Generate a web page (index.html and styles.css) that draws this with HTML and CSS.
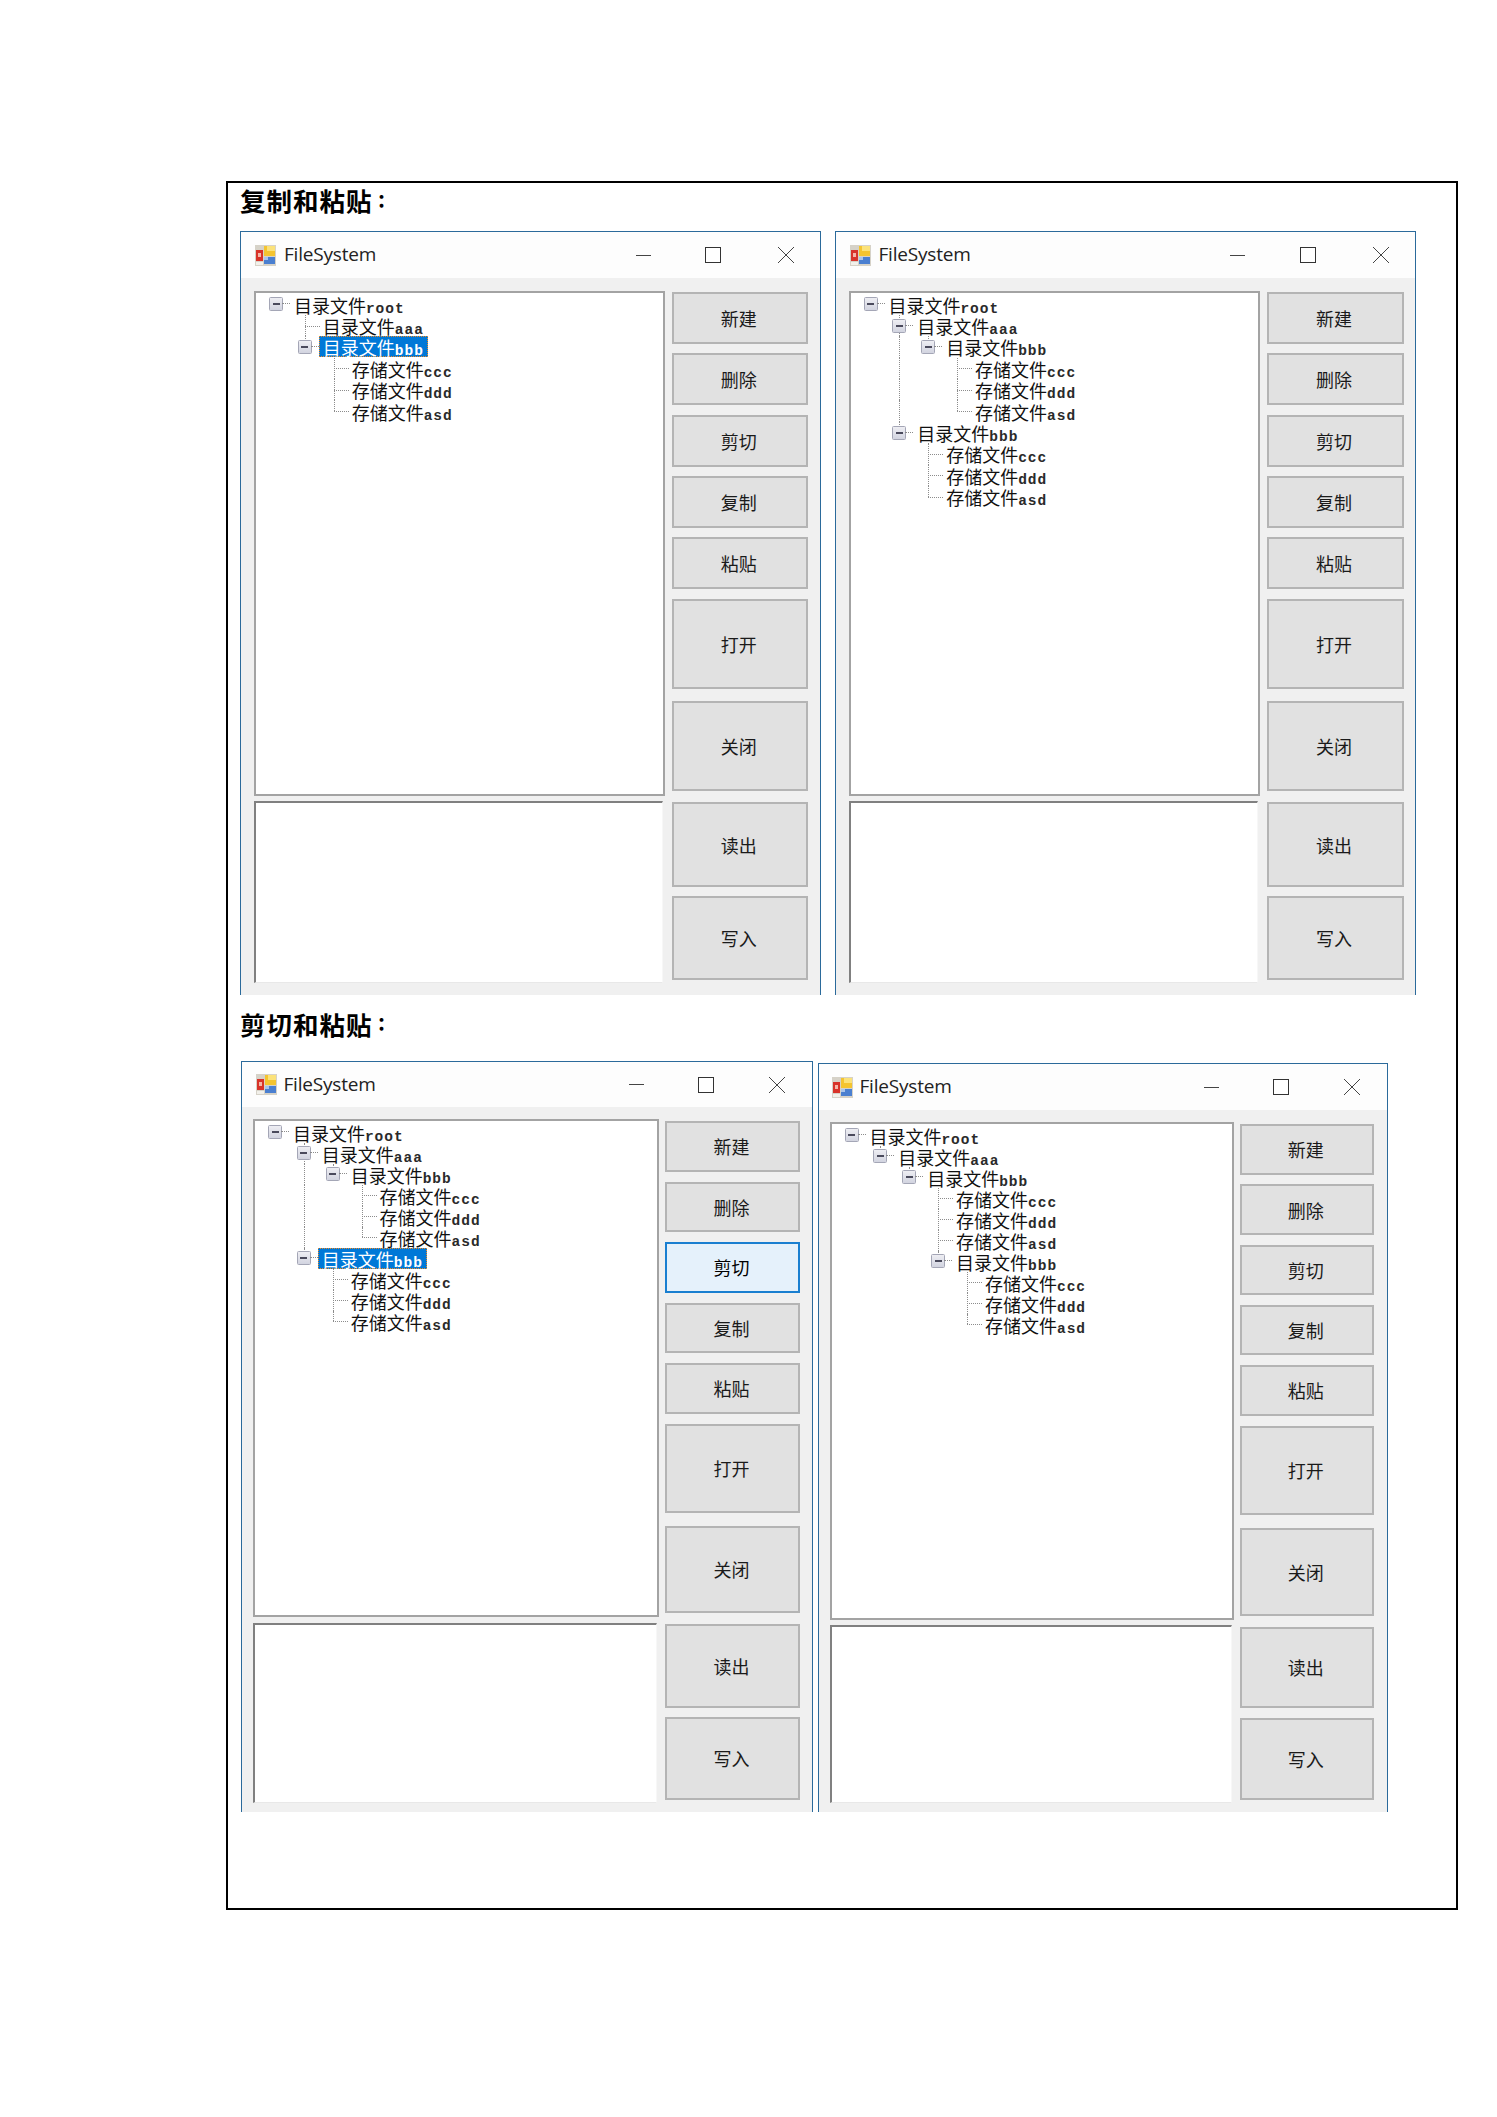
FILE: index.html
```html
<!DOCTYPE html>
<html lang="zh-CN">
<head>
<meta charset="utf-8">
<title>FileSystem</title>
<link rel="stylesheet" href="styles.css">
</head>
<body>
<svg class="defs" width="0" height="0" aria-hidden="true">
  <symbol id="app" viewBox="0 0 21 21">
    <rect x="0" y="0" width="21" height="21" fill="#d6d2c8"/>
    <rect x="9" y="1" width="11" height="10" fill="#f4c430"/>
    <rect x="12" y="1" width="8" height="5" fill="#fbe27a"/>
    <rect x="1" y="5" width="7" height="11" fill="#d8332a"/>
    <rect x="3" y="8" width="3" height="4" fill="#f5b5a8"/>
    <rect x="9" y="12" width="11" height="7" fill="#4a7fd0"/>
    <rect x="9" y="12" width="4" height="3" fill="#a9c4ea"/>
    <rect x="1" y="17" width="7" height="3" fill="#f2f0ea"/>
  </symbol>
</svg>

<main class="sheet">
  <h2 class="section first">复制和粘贴<span class="colon">：</span></h2>
  <div class="pair gap-wide">

    <section class="win w1">
      <header class="titlebar">
        <svg class="app-icon"><use href="#app"/></svg>
        <span class="title">FileSystem</span>
        <span class="controls"><i class="ctl min"></i><i class="ctl max"></i><i class="ctl close"></i></span>
      </header>
      <div class="client">
        <div class="panes">
          <div class="tree">
            <div class="row"><i class="cell node"><u class="box"></u></i><span class="label">目录文件<b>root</b></span></div>
            <div class="row"><i class="cell"></i><i class="cell tee"></i><span class="label">目录文件<b>aaa</b></span></div>
            <div class="row"><i class="cell"></i><i class="cell node up"><u class="box"></u></i><span class="label selected">目录文件<b>bbb</b></span></div>
            <div class="row"><i class="cell"></i><i class="cell"></i><i class="cell tee"></i><span class="label">存储文件<b>ccc</b></span></div>
            <div class="row"><i class="cell"></i><i class="cell"></i><i class="cell tee"></i><span class="label">存储文件<b>ddd</b></span></div>
            <div class="row"><i class="cell"></i><i class="cell"></i><i class="cell ell"></i><span class="label">存储文件<b>asd</b></span></div>
          </div>
          <div class="textbox"></div>
        </div>
        <div class="actions">
          <button class="btn">新建</button><button class="btn">删除</button><button class="btn">剪切</button><button class="btn">复制</button><button class="btn">粘贴</button>
          <button class="btn open">打开</button><button class="btn shut">关闭</button><button class="btn read">读出</button><button class="btn write">写入</button>
        </div>
      </div>
    </section>

    <section class="win w2">
      <header class="titlebar">
        <svg class="app-icon"><use href="#app"/></svg>
        <span class="title">FileSystem</span>
        <span class="controls"><i class="ctl min"></i><i class="ctl max"></i><i class="ctl close"></i></span>
      </header>
      <div class="client">
        <div class="panes">
          <div class="tree">
            <div class="row"><i class="cell node"><u class="box"></u></i><span class="label">目录文件<b>root</b></span></div>
            <div class="row"><i class="cell"></i><i class="cell node up down"><u class="box"></u></i><span class="label">目录文件<b>aaa</b></span></div>
            <div class="row"><i class="cell"></i><i class="cell pipe"></i><i class="cell node up"><u class="box"></u></i><span class="label">目录文件<b>bbb</b></span></div>
            <div class="row"><i class="cell"></i><i class="cell pipe"></i><i class="cell"></i><i class="cell tee"></i><span class="label">存储文件<b>ccc</b></span></div>
            <div class="row"><i class="cell"></i><i class="cell pipe"></i><i class="cell"></i><i class="cell tee"></i><span class="label">存储文件<b>ddd</b></span></div>
            <div class="row"><i class="cell"></i><i class="cell pipe"></i><i class="cell"></i><i class="cell ell"></i><span class="label">存储文件<b>asd</b></span></div>
            <div class="row"><i class="cell"></i><i class="cell node up"><u class="box"></u></i><span class="label">目录文件<b>bbb</b></span></div>
            <div class="row"><i class="cell"></i><i class="cell"></i><i class="cell tee"></i><span class="label">存储文件<b>ccc</b></span></div>
            <div class="row"><i class="cell"></i><i class="cell"></i><i class="cell tee"></i><span class="label">存储文件<b>ddd</b></span></div>
            <div class="row"><i class="cell"></i><i class="cell"></i><i class="cell ell"></i><span class="label">存储文件<b>asd</b></span></div>
          </div>
          <div class="textbox"></div>
        </div>
        <div class="actions">
          <button class="btn">新建</button><button class="btn">删除</button><button class="btn">剪切</button><button class="btn">复制</button><button class="btn">粘贴</button>
          <button class="btn open">打开</button><button class="btn shut">关闭</button><button class="btn read">读出</button><button class="btn write">写入</button>
        </div>
      </div>
    </section>
  </div>

  <h2 class="section second">剪切和粘贴<span class="colon">：</span></h2>
  <div class="pair gap-narrow">

    <section class="win w3">
      <header class="titlebar">
        <svg class="app-icon"><use href="#app"/></svg>
        <span class="title">FileSystem</span>
        <span class="controls"><i class="ctl min"></i><i class="ctl max"></i><i class="ctl close"></i></span>
      </header>
      <div class="client">
        <div class="panes">
          <div class="tree">
            <div class="row"><i class="cell node"><u class="box"></u></i><span class="label">目录文件<b>root</b></span></div>
            <div class="row"><i class="cell"></i><i class="cell node up down"><u class="box"></u></i><span class="label">目录文件<b>aaa</b></span></div>
            <div class="row"><i class="cell"></i><i class="cell pipe"></i><i class="cell node up"><u class="box"></u></i><span class="label">目录文件<b>bbb</b></span></div>
            <div class="row"><i class="cell"></i><i class="cell pipe"></i><i class="cell"></i><i class="cell tee"></i><span class="label">存储文件<b>ccc</b></span></div>
            <div class="row"><i class="cell"></i><i class="cell pipe"></i><i class="cell"></i><i class="cell tee"></i><span class="label">存储文件<b>ddd</b></span></div>
            <div class="row"><i class="cell"></i><i class="cell pipe"></i><i class="cell"></i><i class="cell ell"></i><span class="label">存储文件<b>asd</b></span></div>
            <div class="row"><i class="cell"></i><i class="cell node up"><u class="box"></u></i><span class="label selected">目录文件<b>bbb</b></span></div>
            <div class="row"><i class="cell"></i><i class="cell"></i><i class="cell tee"></i><span class="label">存储文件<b>ccc</b></span></div>
            <div class="row"><i class="cell"></i><i class="cell"></i><i class="cell tee"></i><span class="label">存储文件<b>ddd</b></span></div>
            <div class="row"><i class="cell"></i><i class="cell"></i><i class="cell ell"></i><span class="label">存储文件<b>asd</b></span></div>
          </div>
          <div class="textbox"></div>
        </div>
        <div class="actions">
          <button class="btn">新建</button><button class="btn">删除</button><button class="btn focused">剪切</button><button class="btn">复制</button><button class="btn">粘贴</button>
          <button class="btn open">打开</button><button class="btn shut">关闭</button><button class="btn read">读出</button><button class="btn write">写入</button>
        </div>
      </div>
    </section>

    <section class="win w4">
      <header class="titlebar">
        <svg class="app-icon"><use href="#app"/></svg>
        <span class="title">FileSystem</span>
        <span class="controls"><i class="ctl min"></i><i class="ctl max"></i><i class="ctl close"></i></span>
      </header>
      <div class="client">
        <div class="panes">
          <div class="tree">
            <div class="row"><i class="cell node"><u class="box"></u></i><span class="label">目录文件<b>root</b></span></div>
            <div class="row"><i class="cell"></i><i class="cell node up"><u class="box"></u></i><span class="label">目录文件<b>aaa</b></span></div>
            <div class="row"><i class="cell"></i><i class="cell"></i><i class="cell node up"><u class="box"></u></i><span class="label">目录文件<b>bbb</b></span></div>
            <div class="row"><i class="cell"></i><i class="cell"></i><i class="cell"></i><i class="cell tee"></i><span class="label">存储文件<b>ccc</b></span></div>
            <div class="row"><i class="cell"></i><i class="cell"></i><i class="cell"></i><i class="cell tee"></i><span class="label">存储文件<b>ddd</b></span></div>
            <div class="row"><i class="cell"></i><i class="cell"></i><i class="cell"></i><i class="cell tee"></i><span class="label">存储文件<b>asd</b></span></div>
            <div class="row"><i class="cell"></i><i class="cell"></i><i class="cell"></i><i class="cell node up"><u class="box"></u></i><span class="label">目录文件<b>bbb</b></span></div>
            <div class="row"><i class="cell"></i><i class="cell"></i><i class="cell"></i><i class="cell"></i><i class="cell tee"></i><span class="label">存储文件<b>ccc</b></span></div>
            <div class="row"><i class="cell"></i><i class="cell"></i><i class="cell"></i><i class="cell"></i><i class="cell tee"></i><span class="label">存储文件<b>ddd</b></span></div>
            <div class="row"><i class="cell"></i><i class="cell"></i><i class="cell"></i><i class="cell"></i><i class="cell ell"></i><span class="label">存储文件<b>asd</b></span></div>
          </div>
          <div class="textbox"></div>
        </div>
        <div class="actions">
          <button class="btn">新建</button><button class="btn">删除</button><button class="btn">剪切</button><button class="btn">复制</button><button class="btn">粘贴</button>
          <button class="btn open">打开</button><button class="btn shut">关闭</button><button class="btn read">读出</button><button class="btn write">写入</button>
        </div>
      </div>
    </section>
  </div>
</main>
</body>
</html>
```

FILE: styles.css
```css
* { box-sizing: border-box; }

html, body { margin: 0; background: #fff; }

body { padding: 181px 0 0 226px; }

.defs { display: block; height: 0; }

.sheet {
  width: 1232px;
  height: 1729px;
  border: 2.5px solid #000;
  padding-left: 12px;
  font-family: "Noto Sans CJK SC", "Liberation Sans", sans-serif;
}

.section {
  margin: 0;
  font-size: 25.5px;
  font-weight: 700;
  color: #000;
  display: flex;
  align-items: center;
  letter-spacing: 1px;
}
.section.first { height: 48px; margin-top: -7.5px; margin-bottom: 7.5px; }
.section.second { height: 66px; padding-bottom: 10px; }
.colon { font-family: "Noto Sans CJK TC", sans-serif; font-size: 18px; font-weight: 900; letter-spacing: 0; }

.pair { display: flex; align-items: flex-start; }
.gap-wide { gap: 13.5px; }
.gap-narrow { gap: 4.5px; padding-left: .5px; }

/* window geometry, one set per captured screenshot */
.w1, .w2 {
  --win-h: 764px; --bar-h: 46px; --pad-l: 13px; --pad-t: 13px;
  --row: 21.4px; --btn-top: 1px; --col-gap: 6.5px;
  --s: 52px; --pitch: 9.25px;
  --open: 90px; --open-m: 10px; --shut: 90px; --shut-m: 12px;
  --read: 85px; --read-m: 11px; --write: 84px; --write-m: 9px;
  --tree-h: 505px; --text-h: 182px; --pane-gap: 5px;
  --title-l: 8px; --icon-l: 14px; --close-gap: 57px;
}
.w1 { width: 581px; --tree-w: 411px; --btn-w: 136.5px; --min-x: 394.5px; }
.w2 { width: 581.5px; --tree-w: 411.5px; --btn-w: 137px; --min-x: 394.5px; }
.w3 {
  width: 572.5px;
  --win-h: 751px; --bar-h: 45px; --pad-l: 11.5px; --pad-t: 12px;
  --row: 21px; --btn-top: 2px; --col-gap: 6.5px;
  --tree-w: 405.5px; --btn-w: 135px; --min-x: 387px;
  --s: 50.5px; --pitch: 10px;
  --open: 89px; --open-m: 10px; --shut: 87px; --shut-m: 13px;
  --read: 84px; --read-m: 11px; --write: 83px; --write-m: 9px;
  --tree-h: 498px; --text-h: 180px; --pane-gap: 6px;
  --title-l: 7px; --icon-l: 14px; --close-gap: 54.5px;
}
.w4 {
  width: 570px; margin-top: 2px;
  --win-h: 749px; --bar-h: 46px; --pad-l: 11px; --pad-t: 12px;
  --row: 21px; --btn-top: 2px; --col-gap: 6px;
  --tree-w: 404px; --btn-w: 134.5px; --min-x: 385px;
  --s: 50.5px; --pitch: 9.75px;
  --open: 89px; --open-m: 10px; --shut: 88px; --shut-m: 13px;
  --read: 81px; --read-m: 11px; --write: 82px; --write-m: 10px;
  --tree-h: 498px; --text-h: 178px; --pane-gap: 5px;
  --title-l: 7px; --icon-l: 13px; --close-gap: 54.5px;
}

.win {
  height: var(--win-h);
  background: #f0f0f0;
  border: 1.5px solid #2b6a9b;
  border-bottom: 0;
  display: flex;
  flex-direction: column;
}

.titlebar {
  height: var(--bar-h);
  flex: none;
  background: #fdfdfd;
  display: flex;
  align-items: center;
  padding-left: var(--icon-l);
}
.app-icon { width: 21px; height: 21px; flex: none; }
.title {
  margin: -2px 0 0 var(--title-l);
  font-family: "Open Sans", sans-serif;
  font-size: 19px;
  letter-spacing: -.2px;
  color: #222;
  width: 110px;
  flex: none;
}

.controls { display: flex; align-items: center; margin-left: calc(var(--min-x) - 110px - 21px - var(--title-l) - var(--icon-l)); }
.ctl { display: block; width: 16px; height: 16px; flex: none; margin-right: 54.5px; }
.min { height: 0; border-top: 1.5px solid #444; width: 15px; }
.max { border: 1.5px solid #333; background: #fff; margin-right: var(--close-gap); }
.close {
  background:
    linear-gradient(45deg, transparent 47.5%, #444 47.5%, #444 52.5%, transparent 52.5%),
    linear-gradient(-45deg, transparent 47.5%, #444 47.5%, #444 52.5%, transparent 52.5%);
  margin-right: 0;
}

.client {
  flex: 1;
  display: flex;
  gap: var(--col-gap);
  padding: var(--pad-t) 0 0 var(--pad-l);
}

.panes {
  width: var(--tree-w);
  flex: none;
  display: flex;
  flex-direction: column;
  gap: var(--pane-gap);
}

.tree {
  height: var(--tree-h);
  flex: none;
  background: #fff;
  border: 2px solid #a3a3a3;
  padding: .5px 0 0 6px;
}

.textbox {
  width: calc(100% - 2px);
  height: var(--text-h);
  flex: none;
  background: #fff;
  border-style: solid;
  border-color: #808080 #f7f7f7 #e8e8e8 #808080;
  border-width: 2.5px 1.5px 1.5px 2px;
}

.row {
  display: flex;
  align-items: center;
  height: var(--row);
  font-size: 18px;
  color: #111;
  white-space: nowrap;
}

.cell {
  position: relative;
  display: block;
  width: 28.9px;
  height: var(--row);
  flex: none;
}
.tee::before, .ell::before, .pipe::before, .up::before, .down::after {
  content: "";
  position: absolute;
  left: 14px;
  width: 0;
  border-left: 1px dotted #8c8c8c;
}
.tee::before, .pipe::before { top: 0; bottom: 0; }
.ell::before, .up::before { top: 0; height: 50%; }
.down::after { top: 50%; bottom: 0; }

.tee::after, .ell::after {
  content: "";
  position: absolute;
  left: 14px;
  right: 0;
  top: 50%;
  border-top: 1px dotted #8c8c8c;
}

.box {
  position: absolute;
  left: 7px;
  top: calc(50% - 7px);
  width: 14px;
  height: 14px;
  z-index: 1;
  border: 1.5px solid #a4a6b6;
  border-radius: 1.5px;
  background: linear-gradient(#eeeef3, #d2d4e0);
  display: flex;
  align-items: center;
  justify-content: center;
  text-decoration: none;
}
.box::before { content: ""; width: 7px; height: 2px; background: #4a4a5c; }
.box::after {
  content: "";
  position: absolute;
  left: 12px;
  top: 5px;
  width: 8px;
  border-top: 1px dotted #8c8c8c;
}

.label {
  display: inline-flex;
  align-items: baseline;
  height: 21px;
  line-height: 21px;
  padding: 0 3px;
  border: 1px solid transparent;
  margin-left: -1px;
}
.label b {
  font-family: "Liberation Mono", monospace;
  font-weight: 700;
  font-size: 14.5px;
  letter-spacing: 1px;
  color: #2a2a2a;
}
.selected {
  background: #0078d7;
  color: #fff;
  border: 1px dotted #f08a24;
}
.selected b { color: #fff; }

.actions {
  width: var(--btn-w);
  flex: none;
  padding-top: var(--btn-top);
  display: flex;
  flex-direction: column;
  gap: var(--pitch);
}

.btn {
  height: var(--s);
  flex: none;
  margin: 0;
  padding: 0 2px 0 0;
  background: #e1e1e1;
  border: 2px solid #b4b4b4;
  border-radius: 0;
  font-family: "Noto Sans CJK SC", sans-serif;
  font-size: 18px;
  color: #1a1a1a;
}
.focused { background: #e5f1fb; border-color: #1a7fd0; color: #000; }
.open { height: var(--open); margin-top: calc(var(--open-m) - var(--pitch)); }
.shut { height: var(--shut); margin-top: calc(var(--shut-m) - var(--pitch)); }
.read { height: var(--read); margin-top: calc(var(--read-m) - var(--pitch)); }
.write { height: var(--write); margin-top: calc(var(--write-m) - var(--pitch)); }
```
